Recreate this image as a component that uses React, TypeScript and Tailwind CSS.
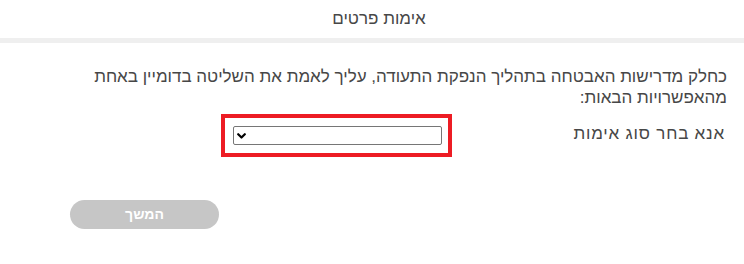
export default function App() {
  return (
    <div
      dir="rtl"
      className="h-[264px] w-[744px] overflow-hidden bg-white font-['Liberation_Sans',Arial,sans-serif] text-[#474747]"
    >
      <header className="flex h-[38px] items-center justify-center pl-[14px] text-[17px]">אימות פרטים</header>
      <div className="h-[5px] bg-[#efefef]" />

      <main className="pl-[70px] pr-[17px] pt-[23px]">
        <p className="w-[660px] text-[17px] leading-[21px]">
          כחלק מדרישות האבטחה בתהליך הנפקת התעודה, עליך לאמת את השליטה בדומיין באחת מהאפשרויות הבאות:
        </p>

        <div className="mt-[6px] flex items-center">
          <label htmlFor="verify-type" className="w-[275px] pr-[2px] pb-[4px] text-[17px] tracking-[0.8px]">
            אנא בחר סוג אימות
          </label>
          <div className="flex h-[43px] w-[231px] items-center border-4 border-[#ed1c24] pr-[6px]">
            <div className="relative">
              <select
                id="verify-type"
                className="block h-[19px] w-[209px] appearance-none rounded-[2px] border border-[#767676] bg-white text-[13px]"
              >
                <option value=""></option>
              </select>
              <svg
                viewBox="0 0 9 6"
                className="pointer-events-none absolute left-[4px] top-[7px] h-[6px] w-[9px]"
                fill="none"
                stroke="#000"
                strokeWidth="2.2"
                strokeLinecap="round"
                strokeLinejoin="round"
              >
                <path d="M1.2 1.2l3.3 3.3 3.3-3.3" />
              </svg>
            </div>
          </div>
        </div>

        <div className="mt-[43px] flex justify-end">
          <button
            type="button"
            disabled
            className="h-[29px] w-[149px] rounded-full bg-[#c6c6c6] text-[14px] font-bold text-white"
          >
            המשך
          </button>
        </div>
      </main>
    </div>
  );
}
